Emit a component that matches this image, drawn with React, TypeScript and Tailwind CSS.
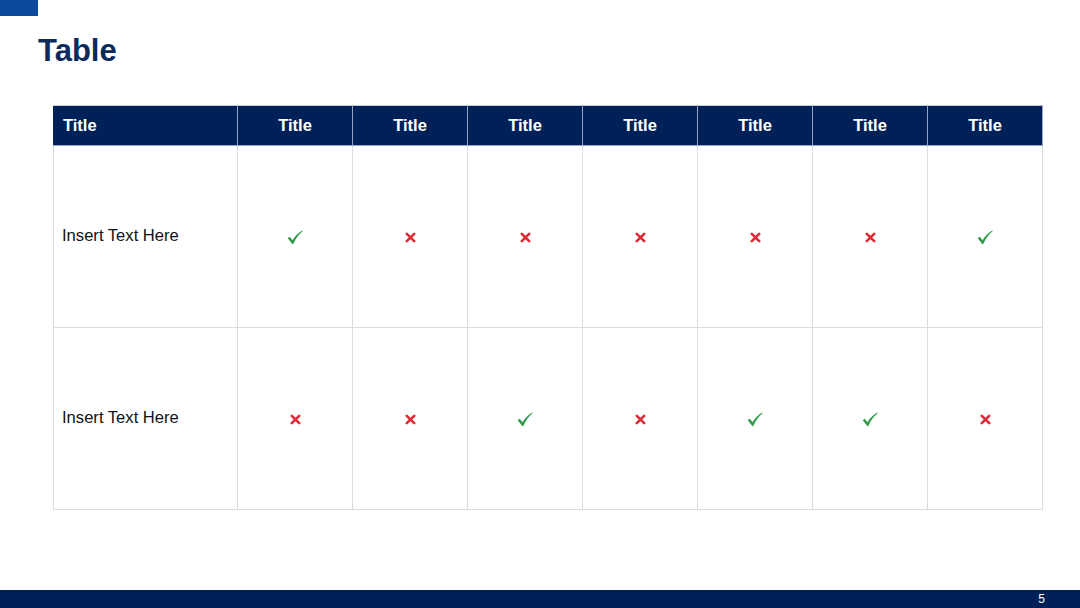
import React from "react";

const Check = () => (
  <svg width="16" height="15" viewBox="0 0 16 15" className="inline-block">
    <path d="M0.8 8.2 L2.6 6.8 L5.6 10.2 C8 6.4 11 3 15.2 0.6 L15.6 1.2 C11.6 4.4 8.8 8.2 6.4 13.8 L5.4 14.2 Z" fill="#2f9a48" />
  </svg>
);

const Cross = () => (
  <svg width="11" height="11" viewBox="0 0 11 11" className="inline-block">
    <path d="M1.8 1.8 L9.2 9.2 M9.2 1.8 L1.8 9.2" fill="none" stroke="#dd2a36" strokeWidth="2.6" strokeLinecap="round" />
  </svg>
);

const rows: { label: string; vals: boolean[] }[] = [
  { label: "Insert Text Here", vals: [true, false, false, false, false, false, true] },
  { label: "Insert Text Here", vals: [false, false, true, false, true, true, false] },
];

export default function App() {
  return (
    <div className="w-[1080px] h-[608px] bg-white flex flex-col relative overflow-hidden" style={{ fontFamily: '"Liberation Sans", Arial, sans-serif' }}>
      <div className="w-[38px] h-[16px] bg-[#0b4b9c]" />
      <div className="pl-[38px] pt-[17px] h-[89px]">
        <h1 className="text-[31px] font-bold text-[#0d2a5c] leading-[36px]">Table</h1>
      </div>
      <div className="pl-[53px]">
        <table className="border-collapse table-fixed w-[989px]">
          <colgroup>
            <col className="w-[184px]" />
            {Array.from({ length: 7 }).map((_, i) => (
              <col key={i} className="w-[115px]" />
            ))}
          </colgroup>
          <thead>
            <tr className="h-[40px] bg-[#002157] text-white text-[16.5px] font-bold">
              <th className="text-left pl-[9px] border border-[#9aa6bf] border-l-[#002157] border-t-[#c9cfdb]">Title</th>
              {Array.from({ length: 7 }).map((_, i) => (
                <th key={i} className="text-center border border-[#9aa6bf] border-t-[#c9cfdb]">Title</th>
              ))}
            </tr>
          </thead>
          <tbody>
            {rows.map((r, ri) => (
              <tr key={ri} className="h-[182px]">
                <td className="pl-[8px] text-[16.6px] text-[#111] border border-[#dcdcdc]">{r.label}</td>
                {r.vals.map((v, i) => (
                  <td key={i} className="text-center border border-[#dcdcdc]">
                    {v ? <Check /> : <Cross />}
                  </td>
                ))}
              </tr>
            ))}
          </tbody>
        </table>
      </div>
      <div className="flex-1" />
      <div className="h-[18px] bg-[#002157] flex items-center justify-end pr-[35px]">
        <span className="text-white text-[12px] leading-none">5</span>
      </div>
    </div>
  );
}
